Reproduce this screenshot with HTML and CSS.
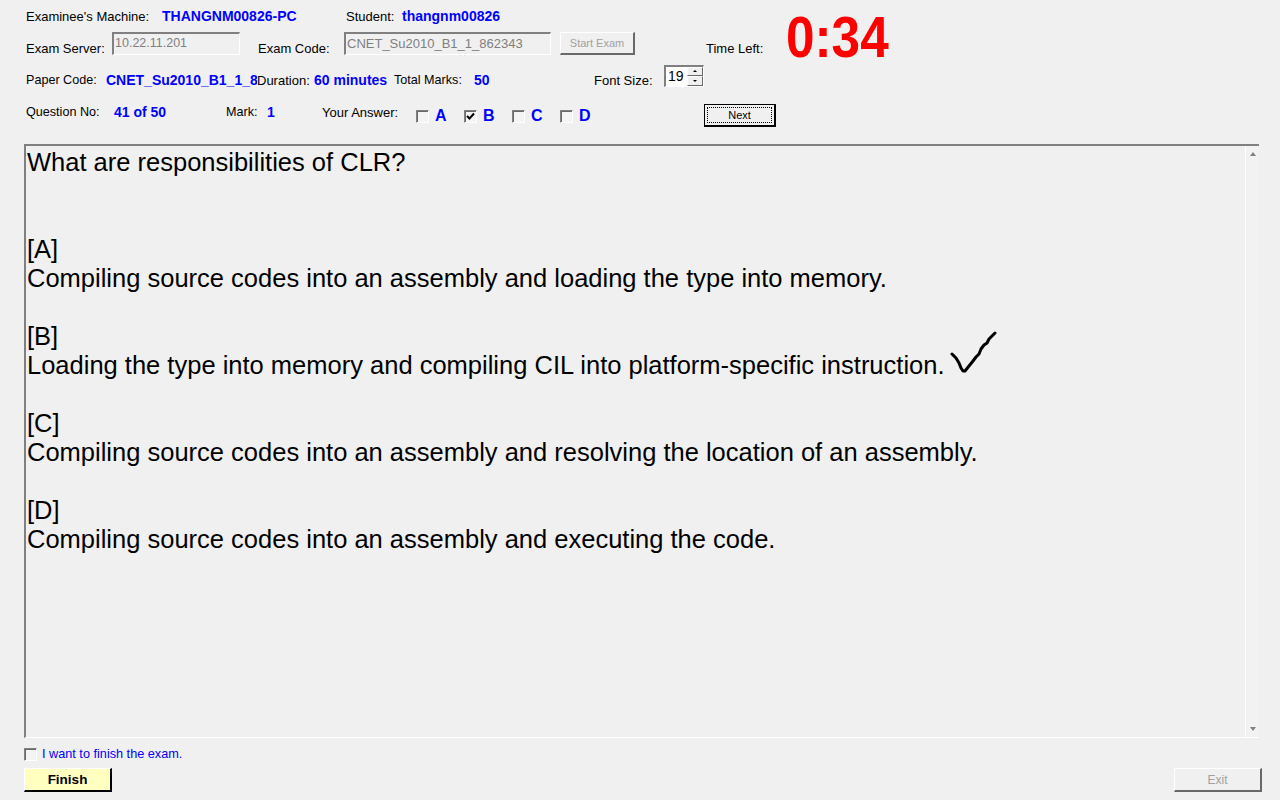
FILE: index.html
```html
<!DOCTYPE html>
<html lang="en">
<head>
    <meta charset="UTF-8">
    <title>Exam Client</title>
    <link rel="stylesheet" href="styles.css">
</head>
<body>
    <div class="top">
        <div class="topLeft">
            <div class="row row1">
                <span class="lbl w136">Examinee's Machine:</span>
                <span class="val w184">THANGNM00826-PC</span>
                <span class="lbl w56">Student:</span>
                <span class="val">thangnm00826</span>
            </div>
            <div class="row row2">
                <span class="lbl w86 low">Exam Server:</span>
                <span class="box boxServer">10.22.11.201</span>
                <span class="lbl w86 low gapCode">Exam Code:</span>
                <span class="box boxCode">CNET_Su2010_B1_1_862343</span>
                <span class="btn btnStart">Start Exam</span>
                <span class="lbl low timeLbl">Time Left:</span>
            </div>
        </div>
        <div class="timer">0:34</div>
    </div>
    <div class="row row3">
        <span class="lbl w80 tight">Paper Code:</span>
        <span class="val clip">CNET_Su2010_B1_1_862343</span>
        <span class="lbl w57">Duration:</span>
        <span class="val w80">60 minutes</span>
        <span class="lbl w80 tight">Total Marks:</span>
        <span class="val w120">50</span>
        <span class="lbl w70">Font Size:</span>
        <span class="spin">
            <span class="spinNum">19</span>
            <span class="spinBtns">
                <span class="spinBtn"><i class="arrowUp"></i></span>
                <span class="spinBtn"><i class="arrowDown"></i></span>
            </span>
        </span>
    </div>
    <div class="row row4">
        <span class="lbl w88 tight">Question No:</span>
        <span class="val w112">41 of 50</span>
        <span class="lbl w41 tight">Mark:</span>
        <span class="val w55">1</span>
        <span class="lbl w94">Your Answer:</span>
        <span class="answers">
            <span class="opt"><span class="cb"></span><b>A</b></span>
            <span class="opt"><span class="cb">
                <svg viewBox="0 0 11 11" width="11" height="11"><path d="M2 5l2.5 2.5L9 2.5" fill="none" stroke="#000" stroke-width="2"/></svg>
            </span><b>B</b></span>
            <span class="opt"><span class="cb"></span><b>C</b></span>
            <span class="opt"><span class="cb"></span><b>D</b></span>
        </span>
        <span class="btnNext"><span class="focus">Next</span></span>
    </div>

    <div class="panel">
        <div class="content">
            <p class="question">What are responsibilities of CLR?</p>
            <p>[A]<br>Compiling source codes into an assembly and loading the type into memory.</p>
            <p>[B]<br>Loading the type into memory and compiling CIL into platform-specific instruction.</p>
            <p>[C]<br>Compiling source codes into an assembly and resolving the location of an assembly.</p>
            <p>[D]<br>Compiling source codes into an assembly and executing the code.</p>
            <svg class="tick" viewBox="0 0 50 46" width="50" height="46">
                <path d="M2 24 L6 28 L9 33 L11 38 L13 41 L15 41 L19 36 L23 31 L26 27 L29 24 L31 19 L34 15 L37 13 L39 9 L42 6 L45 3" fill="none" stroke="#000" stroke-width="3" stroke-linecap="round" stroke-linejoin="round"/>
            </svg>
        </div>
        <div class="scroll">
            <i class="arrowUp"></i>
            <i class="arrowDown"></i>
        </div>
    </div>

    <div class="finishCheck">
        <span class="cb"></span>
        <span>I want to finish the exam.</span>
    </div>
    <div class="bottom">
        <span class="btnFinish">Finish</span>
        <span class="btn btnExit">Exit</span>
    </div>
</body>
</html>
```

FILE: styles.css
```css
* {
    box-sizing: border-box;
}
html, body {
    height: 100%;
}
body {
    margin: 0;
    overflow: hidden;
    background-color: #f0f0f0;
    color: #000;
    font-family: "Liberation Sans", Arial, sans-serif;
    font-size: 13px;
}
.top {
    display: flex;
    height: 64px;
    padding-left: 26px;
}
.topLeft {
    width: 760px;
}
.row {
    display: flex;
    align-items: center;
    white-space: nowrap;
}
.row1 {
    height: 32px;
}
.row2 {
    height: 24px;
}
.row3 {
    height: 32px;
    padding-left: 26px;
}
.row4 {
    height: 32px;
    padding-left: 26px;
}
.lbl {
    flex: none;
}
.tight {
    font-size: 12.6px;
}
.val {
    flex: none;
    color: #0000ff;
    font-weight: bold;
    font-size: 14px;
}
.low {
    padding-top: 8px;
}
.w41 { width: 41px; }
.w55 { width: 55px; }
.w56 { width: 56px; }
.w57 { width: 57px; }
.w70 { width: 70px; }
.w80 { width: 80px; }
.w86 { width: 86px; }
.w88 { width: 88px; }
.w94 { width: 94px; }
.w112 { width: 112px; }
.w120 { width: 120px; }
.w136 { width: 136px; }
.w184 { width: 184px; }
.box {
    height: 23px;
    padding: 2px 0 0 1px;
    align-self: flex-start;
    color: #7f7f7f;
    border-style: solid;
    border-color: #808080 #fff #fff #808080;
    border-width: 2px 1px 1px 2px;
}
.boxServer {
    width: 128px;
    font-size: 12.5px;
}
.boxCode {
    width: 207px;
}
.gapCode {
    margin-left: 18px;
}
.btn {
    display: flex;
    align-items: center;
    justify-content: center;
    flex: none;
    color: #a0a0a0;
    background-color: #f0f0f0;
    border-style: solid;
    border-color: #fff #696969 #696969 #fff;
    border-width: 1px 2px 2px 1px;
}
.btnStart {
    width: 75px;
    height: 23px;
    margin-left: 9px;
    align-self: flex-start;
    font-size: 11px;
}
.timeLbl {
    margin-left: 71px;
}
.timer {
    width: 112px;
    margin-top: 7px;
    color: #ff0000;
    font-size: 57px;
    font-weight: bold;
    line-height: 60px;
    transform: scaleX(0.9);
    transform-origin: left center;
}
.clip {
    width: 151px;
    overflow: hidden;
}
.spin {
    display: flex;
    width: 40px;
    height: 22px;
    margin-top: -9px;
    background-color: #f0f0f0;
    border-style: solid;
    border-color: #808080 #fff #fff #808080;
    border-width: 2px 1px 1px 2px;
}
.spinNum {
    flex: 1;
    padding: 1px 0 0 2px;
    background-color: #fff;
    font-size: 14px;
}
.spinBtns {
    display: flex;
    flex-direction: column;
    width: 16px;
}
.spinBtn {
    display: flex;
    flex: 1;
    align-items: center;
    justify-content: center;
    background-color: #f0f0f0;
    border-style: solid;
    border-color: #fff #696969 #696969 #fff;
    border-width: 1px;
}
.arrowUp, .arrowDown {
    display: block;
    width: 0;
    height: 0;
    border-left: 2px solid transparent;
    border-right: 2px solid transparent;
}
.arrowUp {
    border-bottom: 2px solid #000;
}
.arrowDown {
    border-top: 2px solid #000;
}
.answers {
    display: flex;
    flex: none;
    width: 288px;
    padding-top: 8px;
}
.opt {
    display: flex;
    align-items: center;
    width: 48px;
    color: #0000ff;
    font-size: 16px;
}
.opt b {
    margin-left: 6px;
}
.cb {
    display: block;
    flex: none;
    width: 13px;
    height: 13px;
    background-color: #f4f4f4;
    border-style: solid;
    border-color: #808080 #fff #fff #808080;
    border-width: 1px;
    box-shadow: inset 1px 1px 0 #696969;
}
.cb svg {
    display: block;
}
.btnNext {
    flex: none;
    width: 72px;
    height: 23px;
    margin-top: 6px;
    padding: 2px;
    font-size: 11px;
    background-color: #f0f0f0;
    border: 1px solid #000;
    border-right-width: 2px;
    border-bottom-width: 2px;
}
.focus {
    display: flex;
    align-items: center;
    justify-content: center;
    height: 100%;
    border: 1px dotted #000;
}
.panel {
    display: flex;
    width: 1235px;
    height: 594px;
    margin: 16px 0 0 24px;
    border-style: solid;
    border-color: #808080 transparent #fff #808080;
    border-width: 2px 0 1px 2px;
}
.content {
    position: relative;
    flex: 1;
    padding: 2px 0 0 1px;
    font-size: 25.5px;
    line-height: 29px;
}
.content p {
    margin: 0 0 29px;
}
.content .question {
    margin-bottom: 58px;
}
.tick {
    position: absolute;
    left: 924px;
    top: 184px;
}
.scroll {
    display: flex;
    flex-direction: column;
    align-items: center;
    justify-content: space-between;
    width: 14px;
    padding: 6px 0;
    border-left: 1px solid #fff;
    background-color: #f2f2f2;
}
.scroll .arrowUp {
    border-left-width: 3px;
    border-right-width: 3px;
    border-bottom: 4px solid #808080;
}
.scroll .arrowDown {
    border-left-width: 3px;
    border-right-width: 3px;
    border-top: 4px solid #808080;
}
.finishCheck {
    display: flex;
    align-items: center;
    gap: 5px;
    height: 30px;
    padding: 2px 0 0 24px;
    color: #0000ff;
    font-size: 12.7px;
}
.bottom {
    display: flex;
    justify-content: space-between;
    align-items: flex-start;
    width: 1238px;
    margin-left: 24px;
}
.btnFinish {
    display: flex;
    align-items: center;
    justify-content: center;
    width: 88px;
    height: 24px;
    background-color: #ffffc0;
    font-size: 13.5px;
    font-weight: bold;
    border-style: solid;
    border-color: #fff #000 #000 #fff;
    border-width: 1px 2px 2px 1px;
}
.btnExit {
    width: 88px;
    height: 24px;
    font-size: 12px;
}
```
